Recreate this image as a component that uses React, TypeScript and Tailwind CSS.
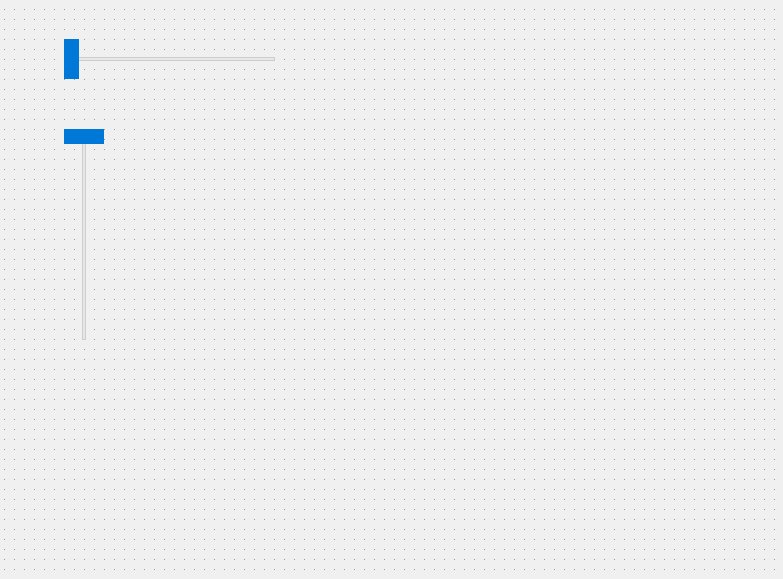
export default function App() {
  return (
    <div className="w-[783px] h-[579px] overflow-hidden bg-[#f0f0f0] bg-[image:conic-gradient(at_1px_1px,transparent_75%,#9a9a9a_0)] bg-[length:10px_10px] bg-[position:4px_9px] pl-[64px] pt-[39px] flex flex-col gap-[50px]">
      {/* horizontal slider */}
      <div className="relative w-[211px] h-[40px] flex items-center">
        <div className="w-full h-[4px] border border-[#cdcdcd] bg-[#e6e7e6]" />
        <div className="absolute left-0 top-0 w-[15px] h-[40px] bg-[#0078d7]" />
      </div>

      {/* vertical slider */}
      <div className="relative w-[40px] h-[211px] flex justify-center">
        <div className="h-full w-[4px] border border-[#cdcdcd] bg-[#e6e7e6]" />
        <div className="absolute left-0 top-0 w-[40px] h-[15px] bg-[#0078d7]" />
      </div>
    </div>
  );
}
